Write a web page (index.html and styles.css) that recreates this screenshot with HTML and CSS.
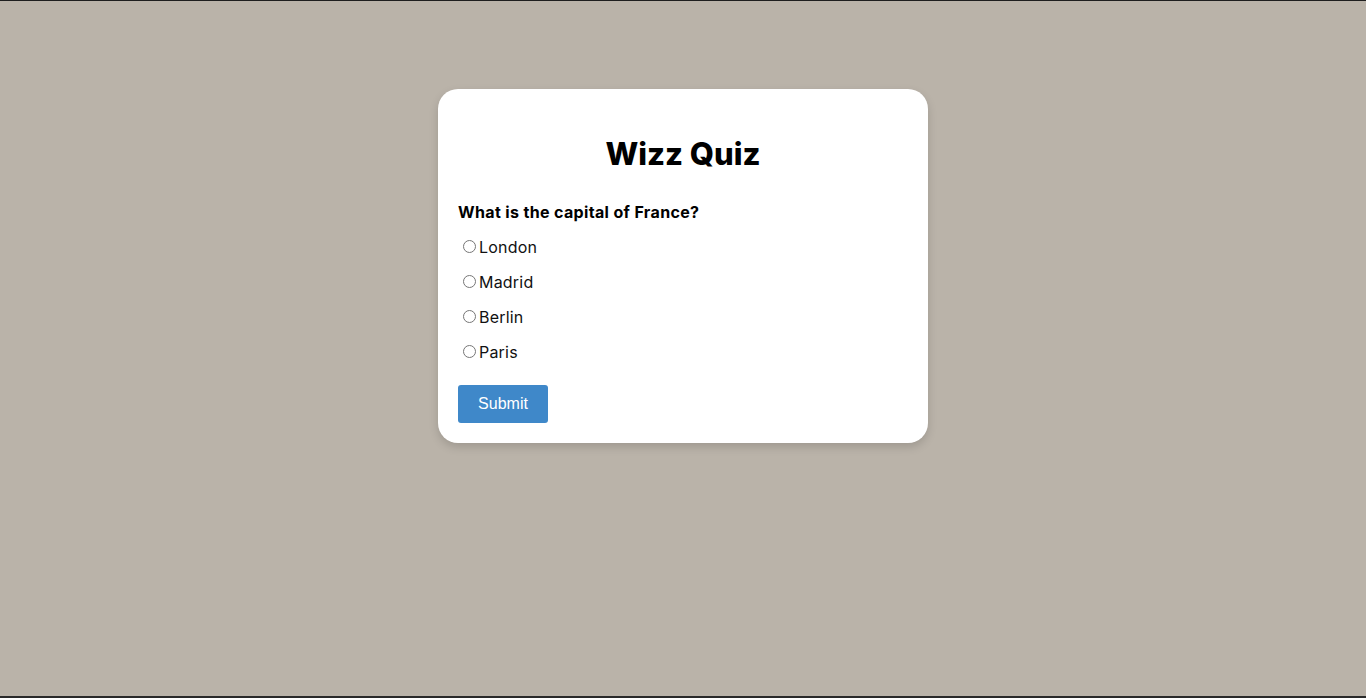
FILE: index.html
```html
<!DOCTYPE html>
<html lang="en">
<head>
<meta charset="utf-8">
<title>Wizz Quiz</title>
<link rel="stylesheet" href="styles.css">
</head>
<body>
<main class="page">
  <section class="card">
    <h1 class="title">Wizz Quiz</h1>
    <p class="question">What is the capital of France?</p>
    <form class="options">
      <label class="option"><input type="radio" name="a" class="radio"><span>London</span></label>
      <label class="option"><input type="radio" name="a" class="radio"><span>Madrid</span></label>
      <label class="option"><input type="radio" name="a" class="radio"><span>Berlin</span></label>
      <label class="option"><input type="radio" name="a" class="radio"><span>Paris</span></label>
    </form>
    <button class="submit" type="button">Submit</button>
  </section>
</main>
</body>
</html>
```

FILE: styles.css
```css
html, body {
  margin: 0;
  padding: 0;
}
body {
  background: #bab3a9;
  font-family: "Inter", "Open Sans", sans-serif;
  height: 698px;
  box-sizing: border-box;
  border-top: 1px solid #1e1e1e;
  border-bottom: 2px solid #2a2a2a;
  overflow: hidden;
}
.page {
  display: flex;
  justify-content: center;
  padding-top: 88px;
}
.card {
  width: 490px;
  box-sizing: border-box;
  background: #fff;
  border-radius: 20px;
  padding: 26px 20px 20px;
  box-shadow: 0 4px 10px rgba(0,0,0,0.15);
}
.title {
  margin: 0 0 7px;
  text-align: center;
  font-size: 31px;
  font-weight: 800;
  line-height: 78px;
  color: #000;
}
.question {
  margin: 0 0 5px;
  font-size: 16px;
  font-weight: 700;
  letter-spacing: 0.35px;
  line-height: 24px;
  color: #000;
}
.options {
  display: flex;
  flex-direction: column;
}
.option {
  display: flex;
  align-items: center;
  height: 35px;
  font-size: 16px;
  letter-spacing: 0.2px;
  color: #111;
}
.radio {
  width: 13px;
  height: 13px;
  margin: 0 3px 0 5px;
}
.submit {
  margin-top: 16px;
  width: 90px;
  height: 38px;
  border: 0;
  border-radius: 3px;
  background: #3f88c9;
  color: #fff;
  font-family: "Liberation Sans", Arial, sans-serif;
  font-size: 16px;
}
```
